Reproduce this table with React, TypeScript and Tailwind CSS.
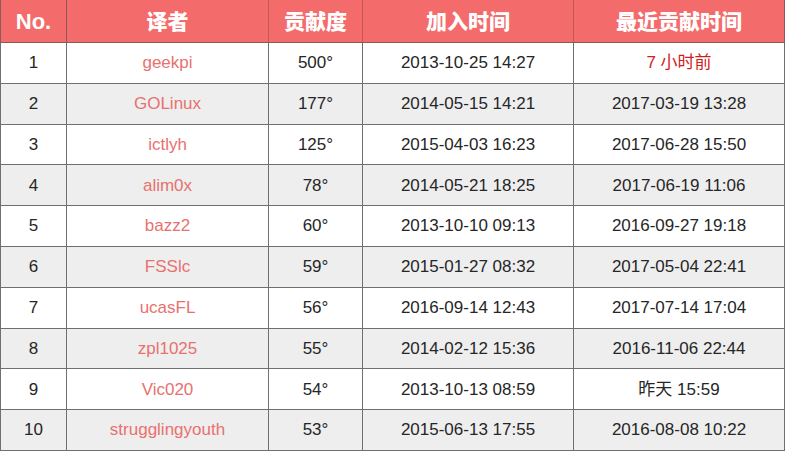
const rows = [
  { no: 1, name: "geekpi", score: "500°", joined: "2013-10-25 14:27", last: "7 小时前", hot: true },
  { no: 2, name: "GOLinux", score: "177°", joined: "2014-05-15 14:21", last: "2017-03-19 13:28" },
  { no: 3, name: "ictlyh", score: "125°", joined: "2015-04-03 16:23", last: "2017-06-28 15:50" },
  { no: 4, name: "alim0x", score: "78°", joined: "2014-05-21 18:25", last: "2017-06-19 11:06" },
  { no: 5, name: "bazz2", score: "60°", joined: "2013-10-10 09:13", last: "2016-09-27 19:18" },
  { no: 6, name: "FSSlc", score: "59°", joined: "2015-01-27 08:32", last: "2017-05-04 22:41" },
  { no: 7, name: "ucasFL", score: "56°", joined: "2016-09-14 12:43", last: "2017-07-14 17:04" },
  { no: 8, name: "zpl1025", score: "55°", joined: "2014-02-12 15:36", last: "2016-11-06 22:44" },
  { no: 9, name: "Vic020", score: "54°", joined: "2013-10-13 08:59", last: "昨天 15:59" },
  { no: 10, name: "strugglingyouth", score: "53°", joined: "2015-06-13 17:55", last: "2016-08-08 10:22" },
];

const cell = "flex items-center justify-center border-r border-[#6f6f6f]";

export default function App() {
  return (
    <div className="h-[454px] w-[786px] bg-white font-['Liberation_Sans','Noto_Sans_CJK_SC',sans-serif]">
      <div className="w-[785px]">
        {/* header */}
        <div className="flex h-[43px] border-b border-[#8a5a5a] bg-[#f46b6b] text-[21px] font-black text-white font-['Noto_Sans_CJK_SC',sans-serif]">
          <div className={`${cell} w-[67px] border-l border-[#8a5a5a] font-['Liberation_Sans',sans-serif] text-[22px]`}>No.</div>
          <div className={`${cell} w-[202px] border-[#c05a5a]`}>译者</div>
          <div className={`${cell} w-[94px] border-[#c05a5a]`}>贡献度</div>
          <div className={`${cell} w-[211px] border-[#c05a5a]`}>加入时间</div>
          <div className={`${cell} w-[211px] border-[#8a5a5a]`}>最近贡献时间</div>
        </div>

        {rows.map((r, i) => (
          <div
            key={r.no}
            className={`flex h-[40.8px] border-b border-[#6f6f6f] text-[17px] text-[#262626] ${i % 2 === 1 ? "bg-[#eeeeee]" : "bg-white"}`}
          >
            <div className={`${cell} w-[67px] border-l`}>{r.no}</div>
            <div className={`${cell} w-[202px] text-[#e8716f]`}>{r.name}</div>
            <div className={`${cell} w-[94px]`}>{r.score}</div>
            <div className={`${cell} w-[211px]`}>{r.joined}</div>
            <div className={`${cell} w-[211px] ${r.hot ? "text-[#d0201e]" : ""}`}>{r.last}</div>
          </div>
        ))}
      </div>
    </div>
  );
}
